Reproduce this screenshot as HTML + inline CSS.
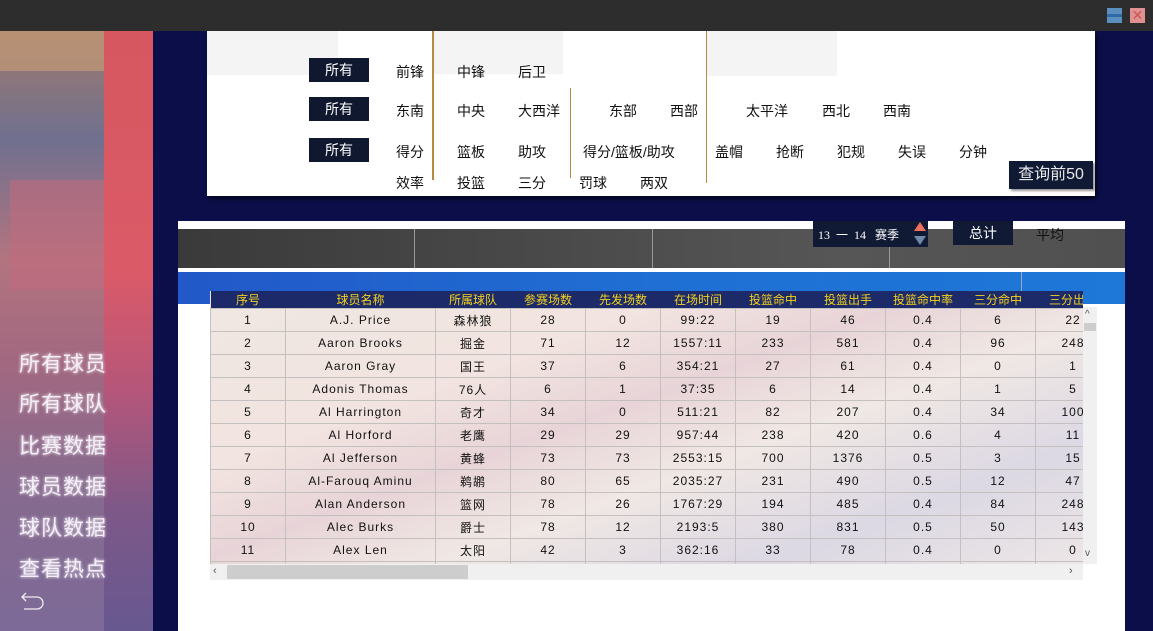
<!DOCTYPE html>
<html><head><meta charset="utf-8"><style>
*{margin:0;padding:0;box-sizing:border-box}
body{width:1153px;height:631px;overflow:hidden;background:#0c0e4a;font-family:"Liberation Sans","Noto Sans CJK SC",sans-serif;position:relative}
.a{position:absolute}
.t{position:absolute;font-size:14px;color:#111;white-space:nowrap}
.btn{position:absolute;width:60px;height:24px;background:#101830;color:#fff;font-size:14px;text-align:center;line-height:24px}
.menu{position:absolute;left:19px;color:#f4eef8;font-size:21px;letter-spacing:1px;text-shadow:0 0 3px #fff;font-family:"WenQuanYi Zen Hei","Noto Sans CJK SC",sans-serif}
table{border-collapse:collapse;table-layout:fixed;font-size:12px;font-family:"Liberation Sans","Noto Sans CJK SC",sans-serif}
td{height:23px;text-align:center;border:1px solid #c4c0c0;color:#111;letter-spacing:1px;white-space:nowrap;overflow:hidden}
th{height:15px;color:#f2d21c;font-weight:normal;font-size:12px;background:#1d2a6a;white-space:nowrap;overflow:hidden}
</style></head><body>
<div class="a" style="left:0;top:0;width:1153px;height:31px;background:#2d2d2d"></div>
<div class="a" style="left:1107px;top:8px;width:15px;height:15px;background:#5b8fbd"></div>
<div class="a" style="left:1107px;top:14px;width:15px;height:3px;background:#2f6aa8"></div>
<div class="a" style="left:1130px;top:8px;width:15px;height:15px;background:#e09090;color:#c55;font-size:14px;line-height:15px;text-align:center">✕</div>

<!-- left panel -->
<div class="a" style="left:0;top:31px;width:104px;height:600px;background:linear-gradient(180deg,#a07a6c 0%,#6f708f 18%,#b2747f 38%,#a26880 55%,#876a8e 75%,#7d6a98 100%)"></div>
<div class="a" style="left:0;top:31px;width:104px;height:40px;background:#c29a78;opacity:.7"></div>
<div class="a" style="left:104px;top:31px;width:49px;height:600px;background:linear-gradient(180deg,#d6575f 0%,#db5a68 40%,#b5567a 60%,#7d5888 80%,#675890 100%)"></div>
<div class="a" style="left:10px;top:180px;width:94px;height:110px;background:#c06b7d;opacity:.6"></div>
<div class="menu" style="top:348px">所有球员</div>
<div class="menu" style="top:388px">所有球队</div>
<div class="menu" style="top:430px">比赛数据</div>
<div class="menu" style="top:471px">球员数据</div>
<div class="menu" style="top:512px">球队数据</div>
<div class="menu" style="top:553px">查看热点</div>
<svg class="a" style="left:20px;top:591px" width="26" height="22"><path d="M6 2 L2 6 L6 10 M2 6 H17 a6 6 0 0 1 0 12 H4" fill="none" stroke="#eee" stroke-width="1.3"/></svg>

<!-- filter panel -->
<div class="a" style="left:207px;top:31px;width:888px;height:165px;background:#fff;box-shadow:2px 3px 4px rgba(0,0,0,.6)"></div>
<div class="a" style="left:207px;top:31px;width:131px;height:44px;background:#f4f4f4"></div>
<div class="a" style="left:433px;top:31px;width:130px;height:43px;background:#f4f4f4"></div>
<div class="a" style="left:707px;top:31px;width:130px;height:45px;background:#f4f4f4"></div>
<div class="a" style="left:432px;top:31px;width:2px;height:149px;background:#b88a40"></div>
<div class="a" style="left:570px;top:88px;width:1px;height:90px;background:#b88a40"></div>
<div class="a" style="left:706px;top:31px;width:1px;height:152px;background:#b88a40"></div>
<div class="btn" style="left:309px;top:58px">所有</div>
<div class="btn" style="left:309px;top:97px">所有</div>
<div class="btn" style="left:309px;top:138px">所有</div>
<div class="t" style="left:396px;top:62px">前锋</div><div class="t" style="left:457px;top:62px">中锋</div><div class="t" style="left:518px;top:62px">后卫</div>
<div class="t" style="left:396px;top:101px">东南</div><div class="t" style="left:457px;top:101px">中央</div><div class="t" style="left:518px;top:101px">大西洋</div><div class="t" style="left:609px;top:101px">东部</div><div class="t" style="left:670px;top:101px">西部</div><div class="t" style="left:746px;top:101px">太平洋</div><div class="t" style="left:822px;top:101px">西北</div><div class="t" style="left:883px;top:101px">西南</div>
<div class="t" style="left:396px;top:142px">得分</div><div class="t" style="left:457px;top:142px">篮板</div><div class="t" style="left:518px;top:142px">助攻</div><div class="t" style="left:583px;top:142px">得分/篮板/助攻</div><div class="t" style="left:715px;top:142px">盖帽</div><div class="t" style="left:776px;top:142px">抢断</div><div class="t" style="left:837px;top:142px">犯规</div><div class="t" style="left:898px;top:142px">失误</div><div class="t" style="left:959px;top:142px">分钟</div>
<div class="t" style="left:396px;top:173px">效率</div><div class="t" style="left:457px;top:173px">投篮</div><div class="t" style="left:518px;top:173px">三分</div><div class="t" style="left:579px;top:173px">罚球</div><div class="t" style="left:640px;top:173px">两双</div>
<div class="a" style="left:1009px;top:161px;width:84px;height:28px;background:#101a34;color:#e8e8e8;font-size:16px;line-height:28px;text-align:center;box-shadow:2px 2px 2px rgba(0,0,0,.4)">查询前50</div>

<!-- table panel -->
<div class="a" style="left:178px;top:221px;width:947px;height:410px;background:#fff"></div>
<div class="a" style="left:178px;top:229px;width:947px;height:39px;background:linear-gradient(90deg,#3a3a3a,#4a4a4a 40%,#565656 70%,#505050)"></div>
<div class="a" style="left:414px;top:229px;width:1px;height:39px;background:#999"></div>
<div class="a" style="left:652px;top:229px;width:1px;height:39px;background:#999"></div>
<div class="a" style="left:889px;top:229px;width:1px;height:39px;background:#999"></div>
<div class="a" style="left:178px;top:272px;width:947px;height:32px;background:linear-gradient(90deg,#2258c8,#1f6fd4 50%,#1e78d8)"></div>
<div class="a" style="left:1021px;top:272px;width:1px;height:20px;background:#9ab"></div>
<div class="a" style="left:813px;top:221px;width:115px;height:26px;background:#101a34;color:#fff;font-size:12px;line-height:28px;padding-left:5px;font-family:'Liberation Serif','Noto Sans CJK SC',serif">13 &nbsp;一 &nbsp;14 &nbsp;&nbsp;赛季</div>
<div class="a" style="left:914px;top:222px;width:0;height:0;border-left:6px solid transparent;border-right:6px solid transparent;border-bottom:9px solid #f07060"></div>
<div class="a" style="left:914px;top:236px;width:0;height:0;border-left:6px solid transparent;border-right:6px solid transparent;border-top:9px solid #6f8aa8"></div>
<div class="a" style="left:953px;top:221px;width:60px;height:24px;background:#101a34;color:#fff;font-size:14px;line-height:24px;text-align:center">总计</div>
<div class="a" style="left:1036px;top:225px;font-size:14px;color:#111">平均</div>

<div class="a" style="left:210px;top:291px;width:873px;height:273px;overflow:hidden;background:linear-gradient(160deg,#efe7e2 0%,#f2e4e0 30%,#e8d4d8 45%,#f0e8e4 60%,#dcd8e4 80%,#ece6e6 100%)">
<table style="width:900px">
<colgroup><col style="width:75px"><col style="width:150px"><col style="width:75px"><col style="width:75px"><col style="width:75px"><col style="width:75px"><col style="width:75px"><col style="width:75px"><col style="width:75px"><col style="width:75px"><col style="width:75px"></colgroup>
<tr><th>序号</th><th>球员名称</th><th>所属球队</th><th>参赛场数</th><th>先发场数</th><th>在场时间</th><th>投篮命中</th><th>投篮出手</th><th>投篮命中率</th><th>三分命中</th><th>三分出手</th></tr>
<tr><td>1</td><td>A.J. Price</td><td>森林狼</td><td>28</td><td>0</td><td>99:22</td><td>19</td><td>46</td><td>0.4</td><td>6</td><td>22</td></tr>
<tr><td>2</td><td>Aaron Brooks</td><td>掘金</td><td>71</td><td>12</td><td>1557:11</td><td>233</td><td>581</td><td>0.4</td><td>96</td><td>248</td></tr>
<tr><td>3</td><td>Aaron Gray</td><td>国王</td><td>37</td><td>6</td><td>354:21</td><td>27</td><td>61</td><td>0.4</td><td>0</td><td>1</td></tr>
<tr><td>4</td><td>Adonis Thomas</td><td>76人</td><td>6</td><td>1</td><td>37:35</td><td>6</td><td>14</td><td>0.4</td><td>1</td><td>5</td></tr>
<tr><td>5</td><td>Al Harrington</td><td>奇才</td><td>34</td><td>0</td><td>511:21</td><td>82</td><td>207</td><td>0.4</td><td>34</td><td>100</td></tr>
<tr><td>6</td><td>Al Horford</td><td>老鹰</td><td>29</td><td>29</td><td>957:44</td><td>238</td><td>420</td><td>0.6</td><td>4</td><td>11</td></tr>
<tr><td>7</td><td>Al Jefferson</td><td>黄蜂</td><td>73</td><td>73</td><td>2553:15</td><td>700</td><td>1376</td><td>0.5</td><td>3</td><td>15</td></tr>
<tr><td>8</td><td>Al-Farouq Aminu</td><td>鹈鹕</td><td>80</td><td>65</td><td>2035:27</td><td>231</td><td>490</td><td>0.5</td><td>12</td><td>47</td></tr>
<tr><td>9</td><td>Alan Anderson</td><td>篮网</td><td>78</td><td>26</td><td>1767:29</td><td>194</td><td>485</td><td>0.4</td><td>84</td><td>248</td></tr>
<tr><td>10</td><td>Alec Burks</td><td>爵士</td><td>78</td><td>12</td><td>2193:5</td><td>380</td><td>831</td><td>0.5</td><td>50</td><td>143</td></tr>
<tr><td>11</td><td>Alex Len</td><td>太阳</td><td>42</td><td>3</td><td>362:16</td><td>33</td><td>78</td><td>0.4</td><td>0</td><td>0</td></tr>
<tr><td>12</td><td>Alexis Ajinca</td><td>鹈鹕</td><td>56</td><td>30</td><td>952:1</td><td>158</td><td>299</td><td>0.5</td><td>0</td><td>0</td></tr>
</table></div>
<!-- scrollbars -->
<div class="a" style="left:1083px;top:307px;width:14px;height:257px;background:#f0f0f0"></div>
<div class="a" style="left:1084px;top:323px;width:12px;height:8px;background:#cdcdcd"></div>
<div class="a" style="left:1085px;top:309px;font-size:10px;color:#555">^</div>
<div class="a" style="left:1085px;top:548px;font-size:10px;color:#555">v</div>
<div class="a" style="left:210px;top:564px;width:873px;height:16px;background:#f0f0f0"></div>
<div class="a" style="left:227px;top:565px;width:241px;height:14px;background:#cdcdcd"></div>
<div class="a" style="left:213px;top:565px;font-size:11px;color:#555">‹</div>
<div class="a" style="left:1069px;top:565px;font-size:11px;color:#555">›</div>
</body></html>
